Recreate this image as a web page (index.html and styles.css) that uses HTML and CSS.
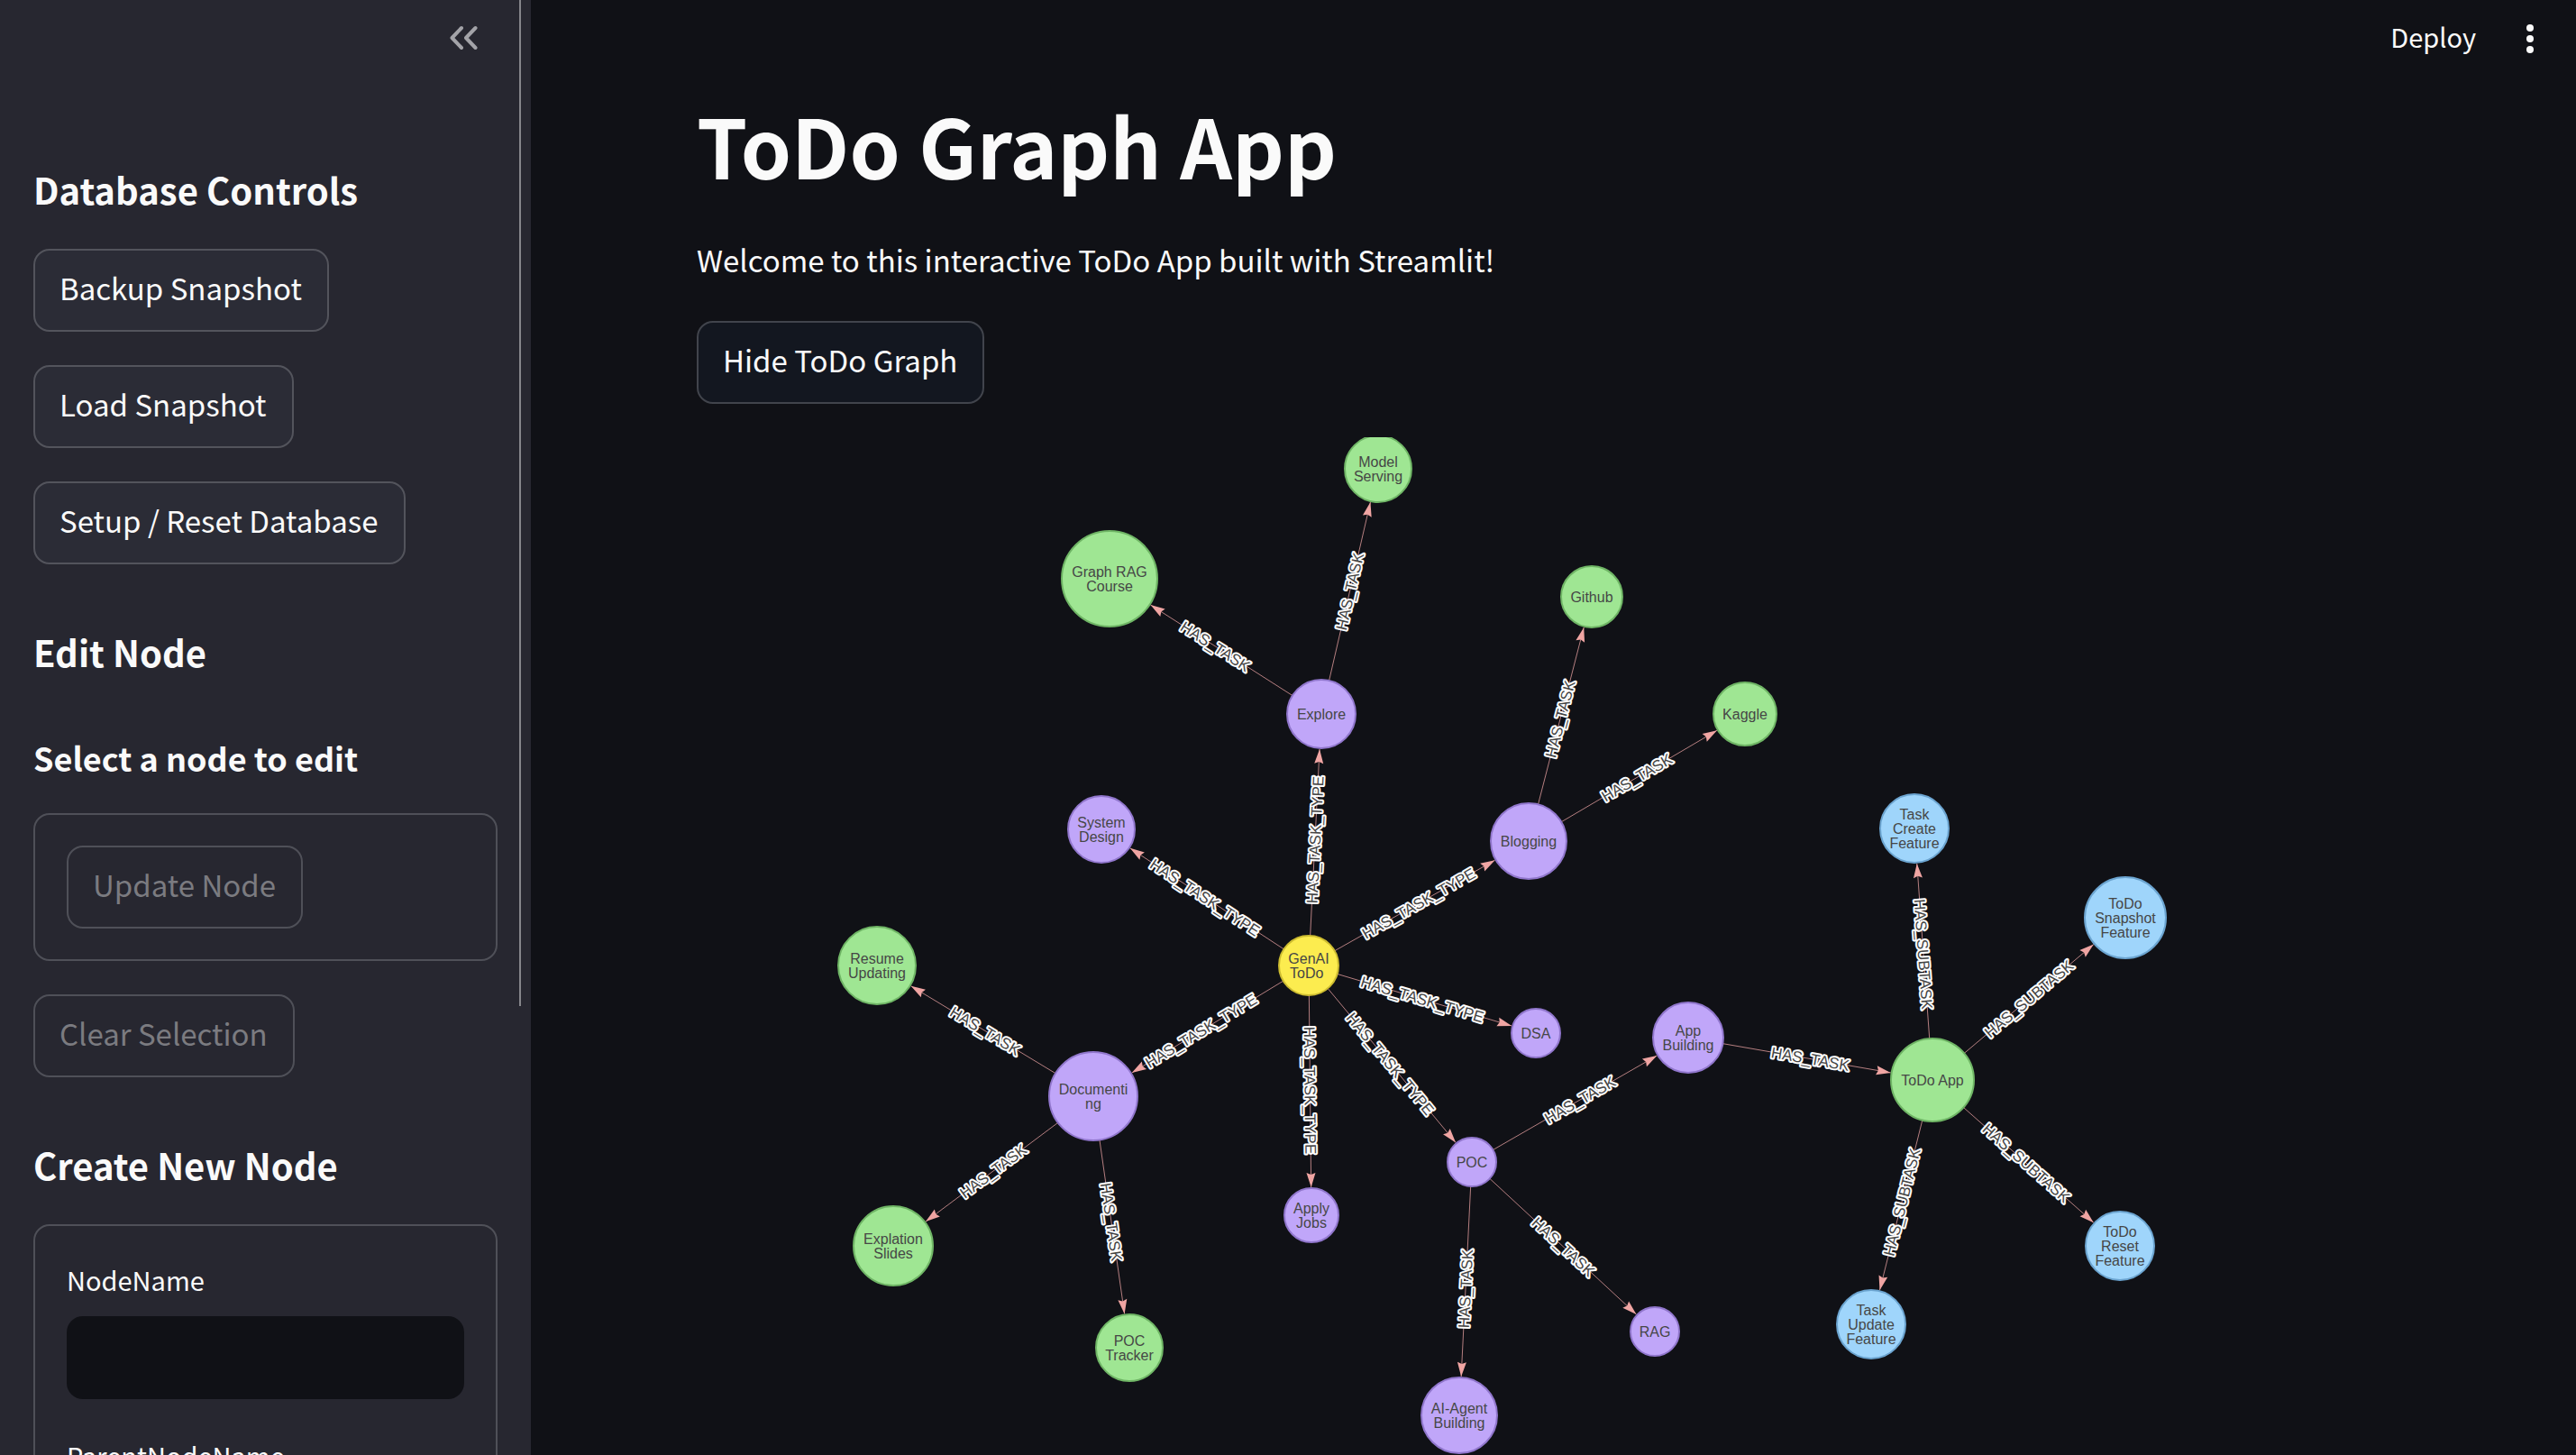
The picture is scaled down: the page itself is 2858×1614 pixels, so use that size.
FILE: index.html
```html
<!DOCTYPE html>
<html lang="en">
<head>
<meta charset="utf-8">
<meta name="viewport" content="width=device-width, initial-scale=1">
<title>ToDo Graph App</title>
<link rel="stylesheet" href="styles.css">
</head>
<body>
<div class="app">
  <aside class="sidebar">
    <div class="sidebar-scroll">
      <div class="sidebar-header">
        <button class="icon-button" type="button" aria-label="Collapse sidebar">
          <svg class="chevrons" viewBox="0 0 36 36" aria-hidden="true">
            <path d="M16 7 5.500 18 16 29M31.500 7 21 18 31.500 29"/>
          </svg>
        </button>
      </div>
      <div class="stack">
        <h3 class="heading">Database Controls</h3>
        <button class="button" type="button">Backup Snapshot</button>
        <button class="button" type="button">Load Snapshot</button>
        <button class="button" type="button">Setup / Reset Database</button>
        <h3 class="heading heading-spaced">Edit Node</h3>
        <h4 class="subheading">Select a node to edit</h4>
        <form class="form">
          <button class="button button-disabled" type="submit" disabled>Update Node</button>
        </form>
        <button class="button button-disabled" type="button" disabled>Clear Selection</button>
        <h3 class="heading heading-spaced">Create New Node</h3>
        <form class="form">
          <div class="field">
            <label class="label" for="node-name">NodeName</label>
            <input class="input" id="node-name" type="text">
          </div>
          <div class="field">
            <label class="label" for="parent-node-name">ParentNodeName</label>
            <input class="input" id="parent-node-name" type="text">
          </div>
        </form>
      </div>
    </div>
    <div class="scroll-thumb"></div>
  </aside>
  <main class="main">
    <header class="toolbar">
      <button class="deploy" type="button">Deploy</button>
      <button class="icon-button" type="button" aria-label="Main menu">
        <svg class="kebab" viewBox="0 0 36 36" aria-hidden="true">
          <circle cx="18" cy="6" r="4"/><circle cx="18" cy="18" r="4"/><circle cx="18" cy="30" r="4"/>
        </svg>
      </button>
    </header>
    <div class="content stack">
      <h1 class="title">ToDo Graph App</h1>
      <p class="intro">Welcome to this interactive ToDo App built with Streamlit!</p>
      <button class="button button-main" type="button">Hide ToDo Graph</button>
      <svg class="graph" id="graph" viewBox="773 485 1901 1129" role="img" aria-label="ToDo graph"></svg>
    </div>
  </main>
</div>
<script src="graph.js"></script>
</body>
</html>
```

FILE: styles.css
```css
* {
  box-sizing: border-box;
}

body {
  margin: 0;
  background: #101116;
  color: #fafafa;
  font-family: "Noto Sans CJK SC", "Noto Sans", sans-serif;
  font-size: 33px;
}

h1,
h3,
h4,
p {
  margin: 0;
}

button,
input {
  font: inherit;
  color: inherit;
}

.app {
  display: flex;
  height: 100vh;
  overflow: hidden;
}

.sidebar {
  position: relative;
  flex: 0 0 589px;
  background: #272730;
}

.sidebar-scroll {
  height: 100%;
  padding: 0 37px;
  overflow: hidden;
}

.sidebar-header {
  display: flex;
  justify-content: flex-end;
  align-items: center;
  height: 84px;
  margin-bottom: 97px;
  padding-right: 20px;
  color: #a3a3a8;
}

.scroll-thumb {
  position: absolute;
  top: 0;
  right: 11px;
  width: 2px;
  height: 1116px;
  background: #86868b;
}

.stack {
  display: flex;
  flex-direction: column;
  align-items: flex-start;
  gap: 37px;
}

.heading {
  font-size: 40px;
  font-weight: 600;
  line-height: 58px;
}

.heading-spaced {
  padding-top: 31px;
}

.subheading {
  padding-top: 26px;
  font-size: 36px;
  font-weight: 600;
  line-height: 50px;
}

.button {
  height: 92px;
  padding: 0 28px 6px 27px;
  border: 2px solid #53545c;
  border-radius: 18px;
  background: #2b2c36;
  line-height: 48px;
  white-space: nowrap;
}

.button-disabled {
  background: transparent;
  border-color: #4f5058;
  color: #7b7b80;
}

.button-main {
  background: #131720;
  border-color: #41444c;
}

.form {
  display: flex;
  flex-direction: column;
  align-items: flex-start;
  align-self: stretch;
  gap: 37px;
  padding: 34px 35px;
  border: 2px solid #4f5058;
  border-radius: 18px;
}

.field {
  display: flex;
  flex-direction: column;
  align-self: stretch;
  gap: 16px;
}

.label {
  font-size: 29px;
  line-height: 50px;
}

.input {
  width: 100%;
  height: 92px;
  padding: 0 28px;
  border: 0;
  border-radius: 18px;
  background: #101116;
}

.main {
  flex: 1;
  min-width: 0;
}

.toolbar {
  display: flex;
  justify-content: flex-end;
  align-items: center;
  gap: 42px;
  height: 86px;
  padding-right: 33px;
}

.deploy {
  padding: 0 0 6px;
  border: 0;
  background: none;
  font-size: 29px;
  line-height: 40px;
}

.icon-button {
  display: flex;
  padding: 0;
  border: 0;
  background: none;
}

.chevrons,
.kebab {
  width: 36px;
  height: 36px;
}

.chevrons {
  fill: none;
  stroke: currentColor;
  stroke-width: 4;
  stroke-linecap: round;
  stroke-linejoin: round;
}

.kebab {
  fill: currentColor;
}

.content {
  padding: 14px 184px 0;
}

.title {
  font-size: 90px;
  font-weight: 700;
  line-height: 120px;
}

.intro {
  line-height: 62px;
}

.graph {
  display: block;
  width: 100%;
  overflow: hidden;
  font-family: "Liberation Sans", Arial, sans-serif;
  font-size: 16px;
  text-anchor: middle;
}

.edge-line {
  stroke: #b57f80;
  stroke-width: 1;
}

.edge-arrow {
  fill: #f0a5a3;
}

.edge-label {
  fill: #454545;
  stroke: #ffffff;
  stroke-width: 4;
  stroke-linejoin: round;
  paint-order: stroke;
  font-size: 17px;
}

.node-label {
  fill: #464646;
}

.node {
  stroke-width: 2;
}

.node-root {
  fill: #fcec4f;
  stroke: #cdbc30;
}

.node-type {
  fill: #c0a6f9;
  stroke: #9076cc;
}

.node-task {
  fill: #9fe693;
  stroke: #6fb565;
}

.node-subtask {
  fill: #9fd5fb;
  stroke: #6ba4d0;
}
```

FILE: graph.js
```js
// Each node: kind, centre x, centre y, radius, label lines.
const nodes = {
  genai: ["root", 1452, 1071, 33, ["GenAI", "ToDo\u00a0"]],
  explore: ["type", 1466, 792, 38, ["Explore"]],
  system: ["type", 1222, 920, 37, ["System", "Design"]],
  blogging: ["type", 1696, 933, 42, ["Blogging"]],
  documenting: ["type", 1213, 1216, 49, ["Documenti", "ng"]],
  dsa: ["type", 1704, 1146, 27, ["DSA"]],
  poc: ["type", 1633, 1289, 27, ["POC"]],
  jobs: ["type", 1455, 1348, 30, ["Apply", "Jobs"]],
  appBuilding: ["type", 1873, 1151, 39, ["App", "Building"]],
  rag: ["type", 1836, 1477, 27, ["RAG"]],
  agent: ["type", 1619, 1570, 42, ["AI-Agent", "Building"]],
  model: ["task", 1529, 520, 37, ["Model", "Serving"]],
  graphRag: ["task", 1231, 642, 53, ["Graph RAG", "Course"]],
  github: ["task", 1766, 662, 34, ["Github"]],
  kaggle: ["task", 1936, 792, 35, ["Kaggle"]],
  resume: ["task", 973, 1071, 43, ["Resume", "Updating"]],
  slides: ["task", 991, 1382, 44, ["Explation", "Slides"]],
  tracker: ["task", 1253, 1495, 37, ["POC", "Tracker"]],
  todoApp: ["task", 2144, 1198, 46, ["ToDo App"]],
  create: ["subtask", 2124, 919, 38, ["Task", "Create", "Feature"]],
  snapshot: ["subtask", 2358, 1018, 45, ["ToDo", "Snapshot", "Feature"]],
  reset: ["subtask", 2352, 1382, 38, ["ToDo", "Reset", "Feature"]],
  update: ["subtask", 2076, 1469, 38, ["Task", "Update", "Feature"]],
};

const edges = [
  ["genai", "explore", "HAS_TASK_TYPE"],
  ["genai", "system", "HAS_TASK_TYPE"],
  ["genai", "blogging", "HAS_TASK_TYPE"],
  ["genai", "documenting", "HAS_TASK_TYPE"],
  ["genai", "dsa", "HAS_TASK_TYPE"],
  ["genai", "poc", "HAS_TASK_TYPE"],
  ["genai", "jobs", "HAS_TASK_TYPE"],
  ["explore", "model", "HAS_TASK"],
  ["explore", "graphRag", "HAS_TASK"],
  ["blogging", "github", "HAS_TASK"],
  ["blogging", "kaggle", "HAS_TASK"],
  ["documenting", "resume", "HAS_TASK"],
  ["documenting", "slides", "HAS_TASK"],
  ["documenting", "tracker", "HAS_TASK"],
  ["poc", "appBuilding", "HAS_TASK"],
  ["poc", "rag", "HAS_TASK"],
  ["poc", "agent", "HAS_TASK"],
  ["appBuilding", "todoApp", "HAS_TASK"],
  ["todoApp", "create", "HAS_SUBTASK"],
  ["todoApp", "snapshot", "HAS_SUBTASK"],
  ["todoApp", "reset", "HAS_SUBTASK"],
  ["todoApp", "update", "HAS_SUBTASK"],
];

const LINE_HEIGHT = 16;
const BASELINE = 6;
const graph = document.getElementById("graph");

function add(tag, attrs, text) {
  const el = document.createElementNS("http://www.w3.org/2000/svg", tag);
  for (const [name, value] of Object.entries(attrs)) el.setAttribute(name, value);
  if (text) el.textContent = text;
  graph.append(el);
}

for (const [from, to, label] of edges) {
  const [, x1, y1] = nodes[from];
  const [, x2, y2, r] = nodes[to];
  const angle = Math.atan2(y2 - y1, x2 - x1);
  const degrees = (angle * 180) / Math.PI;
  const tipX = x2 - (r + 1) * Math.cos(angle);
  const tipY = y2 - (r + 1) * Math.sin(angle);
  const midX = (x1 + x2) / 2;
  const midY = (y1 + y2) / 2;
  // Labels of edges that run leftwards are turned so that they stay readable.
  const turn = x2 < x1 ? degrees + 180 : degrees;

  add("line", { class: "edge-line", x1, y1, x2: tipX, y2: tipY });
  add("path", {
    class: "edge-arrow",
    d: "M0 0L-16 5L-14 0L-16 -5Z",
    transform: `translate(${tipX} ${tipY}) rotate(${degrees})`,
  });
  add("text", {
    class: "edge-label",
    y: BASELINE,
    transform: `translate(${midX} ${midY}) rotate(${turn})`,
  }, label);
}

for (const [kind, cx, cy, r, lines] of Object.values(nodes)) {
  add("circle", { class: `node node-${kind}`, cx, cy, r });
  lines.forEach((line, i) => {
    const y = cy + BASELINE + LINE_HEIGHT * (i - (lines.length - 1) / 2);
    add("text", { class: "node-label", x: cx, y }, line);
  });
}
```
